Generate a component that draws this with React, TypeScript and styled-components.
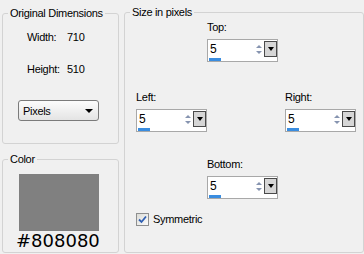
import React from "react";
import styled, { createGlobalStyle } from "styled-components";

const Global = createGlobalStyle`
  html, body { margin: 0; padding: 0; background: #f0f0f0; }
  body { font-family: "Liberation Sans", Arial, sans-serif; font-size: 11px; letter-spacing: -0.3px; color: #000; }
`;

const Page = styled.div`
  display: flex;
  gap: 5px;
  width: 364px;
  height: 254px;
  box-sizing: border-box;
  padding: 6px 0 0 2px;
`;

const LeftCol = styled.div`
  display: flex;
  flex-direction: column;
  gap: 9px;
  width: 117px;
  padding-top: 1px;
`;

const Group = styled.fieldset<{ $h: number; $w?: number }>`
  margin: 0;
  padding: 0;
  min-width: 0;
  box-sizing: border-box;
  height: ${(p) => p.$h}px;
  width: ${(p) => (p.$w ? `${p.$w}px` : "auto")};
  border: 1px solid #d3d3d3;
  border-radius: 3px;
`;

const Legend = styled.legend`
  margin-left: 5px;
  padding: 0 2px;
  font-size: 11px;
  line-height: 13px;
`;

const Dims = styled.div`
  display: grid;
  grid-template-columns: 40px auto;
  row-gap: 19px;
  padding: 11px 0 0 24px;
  line-height: 13px;
`;

const Dropdown = styled.div`
  margin: 24px 0 0 15px;
  width: 81px;
  height: 21px;
  box-sizing: border-box;
  border: 1px solid #7b7b7b;
  border-radius: 3px;
  background: linear-gradient(#fcfcfc, #e4e4e4);
  display: flex;
  align-items: center;
  justify-content: space-between;
  padding: 0 5px 0 4px;
  font-size: 11px;
`;

const DownTri = styled.span<{ $w: number }>`
  width: 0;
  height: 0;
  border-left: ${(p) => p.$w / 2}px solid transparent;
  border-right: ${(p) => p.$w / 2}px solid transparent;
  border-top: ${(p) => Math.ceil(p.$w / 2)}px solid #000;
`;

const ColorBody = styled.div`
  display: flex;
  flex-direction: column;
  align-items: flex-start;
  padding: 8px 0 0 16px;
`;

const Swatch = styled.div<{ $c: string }>`
  width: 80px;
  height: 57px;
  background: ${(p) => p.$c};
`;

const ColorText = styled.div`
  font-family: "DejaVu Sans", Verdana, sans-serif;
  font-size: 18px;
  line-height: 19px;
  letter-spacing: 0;
  margin-left: -3px;
`;

const SizeGrid = styled.div`
  display: grid;
  grid-template-columns: 71px 78px 71px;
  grid-template-rows: 70px 67px 54px auto;
  padding: 2px 0 0 11px;
`;

const Field = styled.div<{ $col: number; $row: number }>`
  grid-column: ${(p) => p.$col};
  grid-row: ${(p) => p.$row};
  display: flex;
  flex-direction: column;
  align-items: flex-start;
  gap: 5px;
`;

const Label = styled.span`
  line-height: 13px;
`;

const Spin = styled.div`
  width: 71px;
  height: 23px;
  box-sizing: border-box;
  border: 1px solid #a8a8a8;
  background: #fff;
  display: flex;
  flex-direction: column;
`;

const SpinTop = styled.div`
  display: flex;
  height: 17px;
  padding-top: 1px;
`;

const SpinValue = styled.div`
  flex: 1;
  font-size: 12px;
  line-height: 16px;
  padding-left: 2px;
`;

const Arrows = styled.div`
  width: 9px;
  display: flex;
  flex-direction: column;
  align-items: center;
  justify-content: center;
  gap: 3px;
  margin-right: 1px;
`;

const SmallTri = styled.span<{ $up?: boolean }>`
  width: 0;
  height: 0;
  border-left: 3px solid transparent;
  border-right: 3px solid transparent;
  ${(p) =>
    p.$up
      ? "border-bottom: 3px solid #8694b0;"
      : "border-top: 3px solid #8694b0;"}
`;

const DropBtn = styled.div`
  width: 13px;
  box-sizing: border-box;
  border: 1px solid #4a4a4a;
  background: #d6d6d6;
  display: flex;
  align-items: center;
  justify-content: center;
`;

const Track = styled.div`
  height: 4px;
  padding: 1px 0 0 1px;
  box-sizing: border-box;
`;

const Fill = styled.div`
  height: 3px;
  background: #3a8de0;
`;

const CheckRow = styled.label`
  grid-column: 1 / -1;
  grid-row: 4;
  display: flex;
  align-items: center;
  gap: 4px;
  line-height: 13px;
  padding-top: 1px;
`;

const CheckBox = styled.span`
  width: 13px;
  height: 13px;
  box-sizing: border-box;
  border: 1px solid #8e8f8f;
  background: linear-gradient(135deg, #dcdcd7, #fbfbfb);
  display: flex;
  align-items: center;
  justify-content: center;
`;

function SpinField({ label, col, row, value }: { label: string; col: number; row: number; value: number }) {
  return (
    <Field $col={col} $row={row}>
      <Label>{label}</Label>
      <Spin>
        <SpinTop>
          <SpinValue>{value}</SpinValue>
          <Arrows>
            <SmallTri $up />
            <SmallTri />
          </Arrows>
          <DropBtn>
            <DownTri $w={7} />
          </DropBtn>
        </SpinTop>
        <Track>
          <Fill style={{ width: `${value * 2.4}px` }} />
        </Track>
      </Spin>
    </Field>
  );
}

export default function App() {
  return (
    <>
      <Global />
      <Page>
        <LeftCol>
          <Group $h={137}>
            <Legend>Original Dimensions</Legend>
            <Dims>
              <span>Width:</span>
              <span>710</span>
              <span>Height:</span>
              <span>510</span>
            </Dims>
            <Dropdown>
              <span>Pixels</span>
              <DownTri $w={8} />
            </Dropdown>
          </Group>
          <Group $h={100}>
            <Legend>Color</Legend>
            <ColorBody>
              <Swatch $c="#808080" />
              <ColorText>#808080</ColorText>
            </ColorBody>
          </Group>
        </LeftCol>
        <Group $h={247} $w={240}>
          <Legend>Size in pixels</Legend>
          <SizeGrid>
            <SpinField label="Top:" col={2} row={1} value={5} />
            <SpinField label="Left:" col={1} row={2} value={5} />
            <SpinField label="Right:" col={3} row={2} value={5} />
            <SpinField label="Bottom:" col={2} row={3} value={5} />
            <CheckRow>
              <CheckBox>
                <svg width="9" height="9" viewBox="0 0 9 9">
                  <path d="M1 4.5 L3.5 7 L8 1.5" fill="none" stroke="#2f5fb3" strokeWidth="1.8" />
                </svg>
              </CheckBox>
              <span>Symmetric</span>
            </CheckRow>
          </SizeGrid>
        </Group>
      </Page>
    </>
  );
}
